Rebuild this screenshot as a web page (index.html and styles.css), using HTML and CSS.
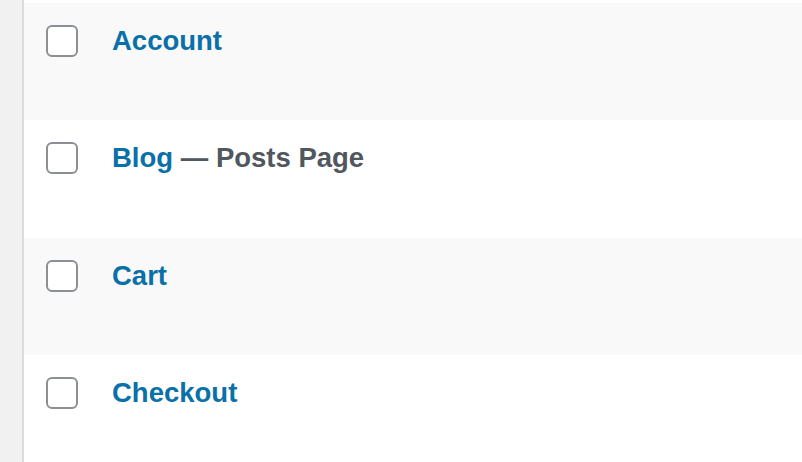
FILE: index.html
```html
<!DOCTYPE html>
<html>
<head>
<meta charset="utf-8">
<link rel="stylesheet" href="styles.css">
</head>
<body>
<div class="page">
  <div class="sidebar"></div>
  <div class="list">
    <div class="row alt">
      <span class="check"></span>
      <div class="title"><a class="link">Account</a></div>
    </div>
    <div class="row tall">
      <span class="check"></span>
      <div class="title"><a class="link">Blog</a><span class="state"> — Posts Page</span></div>
    </div>
    <div class="row alt">
      <span class="check"></span>
      <div class="title"><a class="link">Cart</a></div>
    </div>
    <div class="row last">
      <span class="check"></span>
      <div class="title"><a class="link">Checkout</a></div>
    </div>
  </div>
</div>
</body>
</html>
```
FILE: styles.css
```css
html, body {
  margin: 0;
  padding: 0;
  background: #ffffff;
}
.page {
  display: flex;
  width: 802px;
  height: 462px;
  overflow: hidden;
  font-family: "Liberation Sans", Arial, sans-serif;
}
.sidebar {
  width: 22px;
  flex: none;
  background: #f1f1f1;
  border-right: 2px solid #dcdcde;
}
.list {
  flex: 1;
  padding-top: 3px;
  display: flex;
  flex-direction: column;
}
.row {
  display: flex;
  align-items: flex-start;
  gap: 34px;
  height: 117px;
  box-sizing: border-box;
  padding: 22px 0 0 22px;
  background: #ffffff;
}
.row.tall {
  height: 118px;
}
.row.last {
  flex: 1;
}
.row.alt {
  background: #f9f9f9;
}
.check {
  width: 32px;
  height: 32px;
  box-sizing: border-box;
  border: 2px solid #8c8f94;
  border-radius: 6px;
  background: #ffffff;
  flex: none;
}
.title {
  margin-top: 0;
  font-size: 27.5px;
  line-height: 32px;
  font-weight: 700;
}
.link {
  color: #0a70a8;
}
.state {
  color: #50575e;
}
```
